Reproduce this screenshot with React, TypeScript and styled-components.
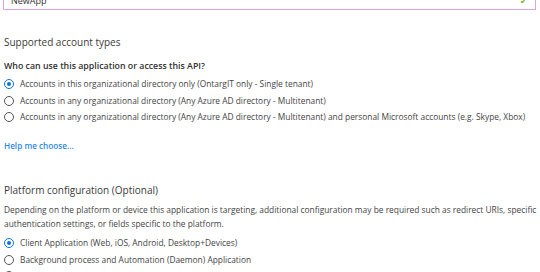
import styled, {createGlobalStyle} from "styled-components";

const GlobalStyle = createGlobalStyle`
  html, body {
    margin: 0;
    padding: 0;
    background: #ffffff;
    overflow: hidden;
  }
  body {
    font-family: "Open Sans", "Noto Sans", sans-serif;
    color: #323130;
  }
`;

const Page = styled.div`
  width: 540px;
  height: 272px;
  padding: 0 4px 0 3px;
  box-sizing: border-box;
  overflow: hidden;
`;

// the name field is scrolled mostly out of view
const NameField = styled.div`
  height: 22px;
  margin-top: -16px;
  border: 1px solid #d9a3e8;
  display: flex;
  align-items: flex-end;
  justify-content: space-between;
  padding: 0 8px 2px 7px;
  font-size: 9px;
  color: #333;
`;

const Check = styled.span`
  color: #6bb72a;
  font-size: 8px;
  line-height: 1;
  margin-bottom: 2px;
`;

const Section = styled.section`
  padding-left: 1px;
`;

const Heading = styled.h2<{top: number}>`
  margin: ${(p) => p.top}px 0 0;
  font-size: 10px;
  font-weight: 400;
  line-height: 14px;
  color: #3b3a39;
`;

const Question = styled.div`
  margin-top: 11px;
  font-size: 8.8px;
  font-weight: 600;
  line-height: 12px;
  color: #323130;
`;

const Description = styled.p`
  margin: 6px 0 0;
  font-size: 8.4px;
  line-height: 14px;
  color: #444;
  width: 534px;
`;

const Options = styled.div`
  display: flex;
  flex-direction: column;
  gap: 4.5px;
  margin-top: 6px;
`;

const Option = styled.label`
  display: flex;
  align-items: center;
  gap: 6px;
  font-size: 8.4px;
  line-height: 12px;
  color: #444;
  height: 12px;
  white-space: nowrap;
`;

const Circle = styled.span<{checked?: boolean}>`
  width: 10px;
  height: 10px;
  box-sizing: border-box;
  border-radius: 50%;
  border: 1px solid ${(p) => (p.checked ? "#0b74d6" : "#555")};
  display: flex;
  align-items: center;
  justify-content: center;
  flex-shrink: 0;
  &::after {
    content: "";
    width: 4px;
    height: 4px;
    border-radius: 50%;
    background: ${(p) => (p.checked ? "#0b74d6" : "transparent")};
  }
`;

const HelpLink = styled.a`
  display: block;
  margin-top: 17px;
  font-size: 8.2px;
  font-weight: 600;
  line-height: 12px;
  color: #2d8be6;
  text-decoration: none;
`;

const accountTypes = [
  "Accounts in this organizational directory only (OntargIT only - Single tenant)",
  "Accounts in any organizational directory (Any Azure AD directory - Multitenant)",
  "Accounts in any organizational directory (Any Azure AD directory - Multitenant) and personal Microsoft accounts (e.g. Skype, Xbox)",
];

const platforms = [
  "Client Application (Web, iOS, Android, Desktop+Devices)",
  "Background process and Automation (Daemon) Application",
  "Other",
];

function App() {
  return (
    <>
      <GlobalStyle />
      <Page>
        <NameField>
          <span>NewApp</span>
          <Check>✔</Check>
        </NameField>
        <Section>
          <Heading top={25}>Supported account types</Heading>
          <Question>Who can use this application or access this API?</Question>
          <Options>
            {accountTypes.map((label, i) => (
              <Option key={label}>
                <Circle checked={i === 0} />
                {label}
              </Option>
            ))}
          </Options>
          <HelpLink href="#">Help me choose...</HelpLink>
        </Section>
        <Section>
          <Heading top={31}>Platform configuration (Optional)</Heading>
          <Description>
            Depending on the platform or device this application is targeting,
            additional configuration may be required such as redirect URIs,
            specific authentication settings, or fields specific to the
            platform.
          </Description>
          <Options>
            {platforms.map((label, i) => (
              <Option key={label}>
                <Circle checked={i === 0} />
                {label}
              </Option>
            ))}
          </Options>
        </Section>
      </Page>
    </>
  );
}

export default App;
